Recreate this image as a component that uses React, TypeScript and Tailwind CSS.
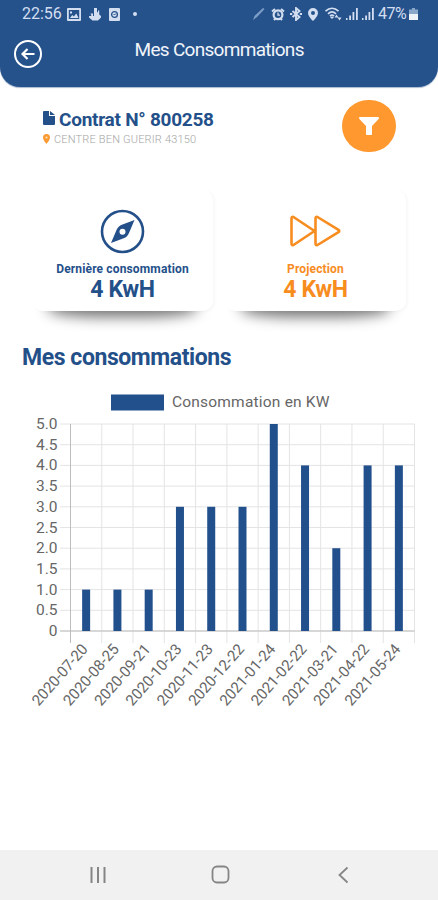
import type { ReactNode } from "react";

const readings = [
  { date: "2020-07-20", value: 1 },
  { date: "2020-08-25", value: 1 },
  { date: "2020-09-21", value: 1 },
  { date: "2020-10-23", value: 3 },
  { date: "2020-11-23", value: 3 },
  { date: "2020-12-22", value: 3 },
  { date: "2021-01-24", value: 5 },
  { date: "2021-02-22", value: 4 },
  { date: "2021-03-21", value: 2 },
  { date: "2021-04-22", value: 4 },
  { date: "2021-05-24", value: 4 },
];

const ticks = ["5.0", "4.5", "4.0", "3.5", "3.0", "2.5", "2.0", "1.5", "1.0", "0.5", "0"];

function StatusBar() {
  return (
    <div className="flex h-7 items-center justify-between pr-5 pl-[22px] text-[#d3def0]">
      <div className="flex items-center">
        <span className="w-[45px] text-base leading-none">22:56</span>
        <svg className="h-[13px] w-[14px]" viewBox="0 0 14 13">
          <path fillRule="evenodd" fill="currentColor" d="M1 0h12a1 1 0 0 1 1 1v11a1 1 0 0 1-1 1H1a1 1 0 0 1-1-1V1a1 1 0 0 1 1-1zm.8 2v9h10.4V2zM3 10l2.2-3 1.6 1.6L9.300 5.500 11.500 10zM3 3.500h2v2H3z" />
        </svg>
        <svg className="ml-2 h-[13px] w-3" viewBox="0 0 12 13">
          <path fill="currentColor" d="M5 0h3v4l1 .6V2.500h1.200v4L12 8v1.500l-3 3H3.500L0 9.500V8h2.500L1.500 5.500H4V8h1z" />
        </svg>
        <svg className="ml-2 h-[13px] w-[11px]" viewBox="0 0 11 13">
          <rect width="11" height="13" rx="1" fill="currentColor" />
          <circle cx="5.500" cy="6.500" r="2.900" fill="none" stroke="#24508a" strokeWidth="1.300" />
          <path d="M4.500 6l1 1 1.500-1.500" fill="none" stroke="#24508a" />
        </svg>
        <span className="-mt-px ml-[13px] size-1 rounded-full bg-[#d3def0]" />
      </div>
      <div className="flex items-center">
        <svg className="mr-[6px] h-3 w-3" viewBox="0 0 12 12">
          <path d="M0 12l1.500-4L10 0l1.500 1L4 9z" fill="#7f9fc8" />
        </svg>
        <svg className="h-[13px] w-[14px]" viewBox="0 0 14 13">
          <path d="M1 3.500L4 1M13 3.500L10 1M3 12l1.300-1.500M11 12l-1.300-1.500" stroke="currentColor" strokeWidth="2" />
          <circle cx="7" cy="6.800" r="4.400" fill="none" stroke="currentColor" strokeWidth="2.200" />
          <path d="M7 4.500v2.700h2" fill="none" stroke="currentColor" strokeWidth="1.300" />
        </svg>
        <svg className="ml-[5px] h-[14px] w-3" viewBox="0 0 12 14">
          <path d="M2.500 4l7 6L6 13V1l3.500 3-7 6" fill="none" stroke="currentColor" strokeWidth="1.900" />
          <path d="M0 7h2.200M9.800 7H12" stroke="currentColor" strokeWidth="1.900" />
        </svg>
        <svg className="ml-[6px] h-[13px] w-[10px]" viewBox="0 0 10 13">
          <path fillRule="evenodd" fill="currentColor" d="M5 0a5 5 0 0 1 5 5c0 3.500-5 8-5 8S0 8.500 0 5a5 5 0 0 1 5-5zm0 3a2 2 0 1 0 0 4 2 2 0 0 0 0-4z" />
        </svg>
        <svg className="ml-[7px] h-[14px] w-[17px]" viewBox="0 0 17 14">
          <g fill="none" stroke="currentColor" strokeWidth="1.700">
            <path d="M.5 4.200c4-3.800 9-3.800 13 0" />
            <path d="M3 6.800c2.500-2.300 5.500-2.300 8 0" />
            <path d="M5 9.200c1.300-1.200 2.800-1.200 4 0" />
          </g>
          <path d="M7 12l-2-2h4zM11.500 7.500l2 3h-4zM14.500 13.500l-2-3h4z" fill="currentColor" />
        </svg>
        <SignalBars className="ml-1" />
        <SignalBars className="ml-[4px]" />
        <span className="ml-[4px] w-[29px] text-base leading-none tracking-[-0.500px]">47%</span>
        <svg className="ml-[2px] h-3 w-[9px]" viewBox="0 0 9 12">
          <path d="M3 0h3v1.500h3V6H0V1.500h3z" fill="#89a6cb" />
          <path d="M0 6h9v6H0z" fill="#eef3fa" />
        </svg>
      </div>
    </div>
  );
}

function SignalBars({ className }: { className: string }) {
  return (
    <svg className={`h-3 w-3 ${className}`} viewBox="0 0 12 12" fill="currentColor">
      <path d="M0 10h1.500v2H0zM3.200 7.500h1.800V12H3.200zM6.500 4h1.800v8H6.500zM10 0h1.800v12H10z" />
    </svg>
  );
}

function Header() {
  return (
    <header className="h-[87px] rounded-b-[20px] bg-[#26528c] shadow-[0_1px_1px_rgba(38,82,140,0.4)]">
      <StatusBar />
      <div className="grid h-[50px] grid-cols-[1fr_auto_1fr] items-center px-[14px]">
        <button className="flex size-7 translate-y-px items-center justify-center rounded-full border-2 border-white">
          <svg className="h-3 w-[14px]" viewBox="0 0 14 12" fill="none" stroke="white" strokeWidth="2.200">
            <path d="M13.500 6H1.500M6.500 1L1.500 6l5 5" />
          </svg>
        </button>
        <h1 className="-mt-[6px] w-[169px] text-[19px] tracking-[-0.700px] whitespace-nowrap text-[#f1f5fa]">Mes Consommations</h1>
      </div>
    </header>
  );
}

function StatCard({ icon, label, value, color }: { icon: ReactNode; label: string; value: string; color: string }) {
  return (
    <div className={`relative h-[121px] ${color}`}>
      {/* curved shadow that only shows under the bottom edge */}
      <div className="absolute inset-x-4 -bottom-[6px] h-5 rounded-[40%] bg-black/55 blur-[7px]" />
      <div className="relative flex h-full flex-col items-center rounded-[10px] bg-white shadow-[2px_1px_3px_rgba(0,0,0,0.030)]">
        <div className="mt-[18px] flex h-[46px] items-center">{icon}</div>
        <p className="mt-[7px] text-xs leading-4 font-bold tracking-[0.150px]">{label}</p>
        <p className="mt-px text-[23px] leading-[24px] font-bold tracking-[-0.300px]">{value}</p>
      </div>
    </div>
  );
}

function Chart() {
  const left = 70.5;
  const top = 24;
  const bottom = 231;
  const step = 344 / readings.length;
  const row = (bottom - top) / 10;

  return (
    <svg className="block h-[320px] w-[438px] overflow-visible" viewBox="0 0 438 320" fontSize="15.500" fill="#666">
      <g stroke="#e4e4e4" strokeWidth="1">
        {ticks.map((tick, i) => (
          <line key={tick} x1="60" x2="414.500" y1={top + i * row} y2={top + i * row} />
        ))}
        {[...readings, null].map((_, i) => (
          <line key={i} x1={left + i * step} x2={left + i * step} y1={top} y2="243" />
        ))}
      </g>
      <path d="M70.500 24V243M60 231H414.500" stroke="#bdbdbd" fill="none" />
      {ticks.map((tick, i) => (
        <text key={tick} x="57.500" y={top + i * row + 5} textAnchor="end">
          {tick}
        </text>
      ))}
      {readings.map((r, i) => {
        const x = left + (i + 0.5) * step;
        return (
          <g key={r.date}>
            <rect x={x - 4} y={bottom - r.value * row * 2} width="8" height={r.value * row * 2} fill="#22508c" />
            <text
              transform={`translate(${x + 2.5} 249.500) rotate(-49)`}
              textAnchor="end"
              fontSize="15.200"
              textLength="76"
              lengthAdjust="spacingAndGlyphs"
            >
              {r.date}
            </text>
          </g>
        );
      })}
      <rect x="111" y="-5.500" width="53" height="16" fill="#22508c" />
    </svg>
  );
}

export default function App() {
  return (
    <div className="flex h-[900px] w-[438px] flex-col overflow-hidden bg-white font-['Roboto',sans-serif]">
      <Header />

      <section className="flex h-[103px] items-start justify-between pt-[13px] pr-[42px] pl-[43px]">
        <div className="pt-[8px]">
          <h2 className="flex items-center gap-[4px] text-[19px] leading-6 font-bold tracking-[-0.260px] text-[#24508a]">
            <svg className="-mt-[5px] h-[14px] w-3" viewBox="0 0 12 14" fill="currentColor">
              <path d="M1 0h5v5h6v8a1 1 0 0 1-1 1H1a1 1 0 0 1-1-1V1a1 1 0 0 1 1-1zM7 0l5 4H7z" />
            </svg>
            Contrat N° 800258
          </h2>
          <p className="flex items-center gap-[4px] text-[11px] leading-[15px] font-light tracking-[0.180px] text-[#a5a5a5]">
            <svg className="-mt-[2px] h-[10px] w-[7px]" viewBox="0 0 7 10">
              <path d="M3.500 0A3.500 3.500 0 0 1 7 3.500C7 6 3.500 10 3.500 10S0 6 0 3.500A3.500 3.500 0 0 1 3.500 0z" fill="#fb9a30" />
              <circle cx="3.500" cy="3.500" r="1.100" fill="#fde0bd" />
            </svg>
            CENTRE BEN GUERIR 43150
          </p>
        </div>
        <button className="flex h-[52px] w-[54px] items-center justify-center rounded-full bg-[#ff982f]">
          <svg className="-mt-px h-[18px] w-5" viewBox="0 0 20 18" fill="white">
            <path d="M.8 0h18.400q1 0 .6 1.800L13 9v8.200q0 .8-.8.800H7.800q-.8 0-.8-.8V9L.2 1.800Q-.2 0 .8 0z" />
          </svg>
        </button>
      </section>

      <section className="grid h-[150px] grid-cols-[181px_181px] gap-3 pl-8">
        <StatCard
          color="text-[#24508a]"
          label="Dernière consommation"
          value="4 KwH"
          icon={
            <svg className="size-[45px]" viewBox="0 0 45 45">
              <circle cx="22.500" cy="22.500" r="20.500" fill="none" stroke="currentColor" strokeWidth="2.600" />
              <path fillRule="evenodd" fill="currentColor" d="M34.500 11L29 24Q27 28.500 23 29.500L11 34L16.500 21Q18.500 16.500 22.500 15.500zM22.500 19.700a3 3 0 1 0 0 6 3 3 0 0 0 0-6z" />
            </svg>
          }
        />
        <StatCard
          color="text-[#f78c1f]"
          label="Projection"
          value="4 KwH"
          icon={
            <svg className="h-8 w-[51px]" viewBox="0 0 51 32" fill="none" stroke="currentColor" strokeWidth="2.600" strokeLinejoin="round">
              <path d="M1.500 3.500v25q0 2 2 1.500L24.500 16 3.500 2q-2-.5-2 1.500zM25.500 3.500v25q0 2 2 1.500L48.500 17.200q1.500-1.200 0-2.400L27.500 2q-2-.5-2 1.500z" />
            </svg>
          }
        />
      </section>

      <h2 className="pt-px pl-[22px] text-[23px] leading-[33px] font-bold tracking-[-0.430px] text-[#24508a]">Mes consommations</h2>

      <section className="mt-[16px] h-[330px]">
        <p className="h-[10px] pl-[172px] text-[15.500px] leading-6 tracking-[0.200px] text-[#666]">Consommation en KW</p>
        <Chart />
      </section>

      <nav className="mt-auto flex h-[50px] items-center bg-[#f1f1f1] pl-[88px] text-[#858585]">
        <svg className="h-[18px] w-5" viewBox="0 0 20 18" stroke="currentColor" strokeWidth="2">
          <path d="M3.500 1v16M10 1v16M16.500 1v16" />
        </svg>
        <svg className="-mt-px ml-[103px] h-[19px] w-[19px]" viewBox="0 0 19 19" fill="none" stroke="currentColor" strokeWidth="1.800">
          <rect x="1.500" y="1.500" width="16" height="16" rx="4.500" />
        </svg>
        <svg className="-mt-px ml-[108px] h-[18px] w-[11px]" viewBox="0 0 11 18" fill="none" stroke="currentColor" strokeWidth="1.800">
          <path d="M9.500 1.500L1.500 9l8 7.500" />
        </svg>
      </nav>
    </div>
  );
}
